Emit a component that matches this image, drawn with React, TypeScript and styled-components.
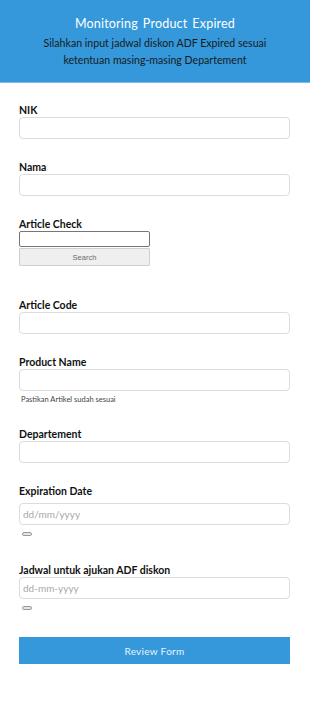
import styled, { createGlobalStyle } from 'styled-components';

const GlobalStyle = createGlobalStyle`
  body {
    margin: 0;
    background: #ffffff;
    font-family: 'Lato', 'Noto Sans', sans-serif;
  }
  * {
    box-sizing: border-box;
  }
`;

const Page = styled.div`
  width: 310px;
  min-height: 712px;
  background: #ffffff;
`;

const Header = styled.header`
  height: 83px;
  background-color: #3498db;
  border-bottom: 1px solid #7cbdea;
  padding-top: 15px;
  text-align: center;

  .title {
    color: #ffffff;
    font-size: 12.5px;
    line-height: 18px;
    letter-spacing: 0.2px;
    word-spacing: 1.5px;
    margin: 0 0 2px;
    font-weight: normal;
  }
  .subtitle {
    color: #1a1a1a;
    font-size: 10.6px;
    line-height: 17px;
    margin: 0;
    padding: 0 30px;
  }
`;

const Form = styled.form`
  display: flex;
  flex-direction: column;
  padding: 20px 20px 0 19px;
`;

const Field = styled.div<{ $gap?: number; $after?: number }>`
  display: flex;
  flex-direction: column;
  margin-bottom: ${(props) => props.$after ?? 21}px;

  label {
    font-size: 10.5px;
    line-height: 14px;
    font-weight: bold;
    color: #111111;
    margin-bottom: ${(props) => props.$gap ?? 0}px;
  }
`;

const TextInput = styled.input`
  width: 100%;
  height: 22px;
  border: 1px solid #dcdcdc;
  border-radius: 4px;
  padding: 0 3px;
  font-family: inherit;
  font-size: 10px;
  color: #333333;
  background: #ffffff;

  &::placeholder {
    color: #a8a8a8;
  }
`;

const SmallInput = styled.input`
  width: 131px;
  height: 16px;
  border: 1px solid #767676;
  border-radius: 2px;
  background: #ffffff;
`;

const SearchButton = styled.button`
  width: 131px;
  height: 18px;
  margin-top: 1px;
  background: #efefef;
  border: 1px solid #cfcfcf;
  border-radius: 1px;
  color: #6b6b6b;
  font-family: 'Liberation Sans', Arial, sans-serif;
  font-size: 7.5px;
  padding: 0;
`;

const Hint = styled.small`
  font-size: 7.5px;
  line-height: 10px;
  color: #444444;
  margin: 4px 0 0 2px;
`;

const ClearPill = styled.button`
  width: 10px;
  height: 4px;
  margin: 7px 0 0 3px;
  padding: 0;
  border: 1px solid #999999;
  border-radius: 3px;
  background: #e6e6e6;
`;

const SubmitButton = styled.button`
  width: 100%;
  height: 27px;
  margin-top: 9px;
  background-color: #3498db;
  border: none;
  color: #e9f3fb;
  font-family: inherit;
  font-size: 10px;
  letter-spacing: 0.3px;
`;

const App = () => {
  return (
    <Page>
      <GlobalStyle />
      <Header>
        <h1 className="title">Monitoring Product Expired</h1>
        <p className="subtitle">Silahkan input jadwal diskon ADF Expired sesuai ketentuan masing-masing Departement</p>
      </Header>
      <Form onSubmit={(e) => e.preventDefault()}>
        <Field>
          <label>NIK</label>
          <TextInput type="text" />
        </Field>
        <Field>
          <label>Nama</label>
          <TextInput type="text" />
        </Field>
        <Field $after={32}>
          <label>Article Check</label>
          <SmallInput type="text" />
          <SearchButton type="button">Search</SearchButton>
        </Field>
        <Field>
          <label>Article Code</label>
          <TextInput type="text" />
        </Field>
        <Field $after={22}>
          <label>Product Name</label>
          <TextInput type="text" />
          <Hint>Pastikan Artikel sudah sesuai</Hint>
        </Field>
        <Field>
          <label>Departement</label>
          <TextInput type="text" />
        </Field>
        <Field $gap={5} $after={27}>
          <label>Expiration Date</label>
          <TextInput type="text" placeholder="dd/mm/yyyy" />
          <ClearPill type="button" />
        </Field>
        <Field $after={18}>
          <label>Jadwal untuk ajukan ADF diskon</label>
          <TextInput type="text" placeholder="dd-mm-yyyy" />
          <ClearPill type="button" />
        </Field>
        <SubmitButton type="submit">Review Form</SubmitButton>
      </Form>
    </Page>
  );
};

export default App;
